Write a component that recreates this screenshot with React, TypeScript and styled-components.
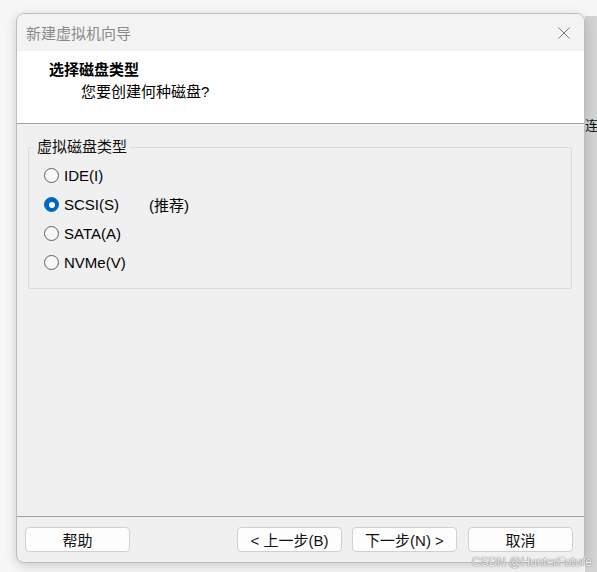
import styled, { createGlobalStyle } from "styled-components";

const GlobalStyle = createGlobalStyle`
  html, body {
    margin: 0;
    padding: 0;
    background: #f7f7f7;
    font-family: "Liberation Sans", "Noto Sans CJK SC", sans-serif;
    font-size: 15px;
    color: #000;
  }
`;

const Screen = styled.div`
  position: relative;
  display: flex;
  align-items: flex-start;
  width: 597px;
  height: 572px;
  padding: 13px 0 0 16px;
  box-sizing: border-box;
  overflow: hidden;
`;

const Window = styled.div`
  display: flex;
  flex-direction: column;
  flex: none;
  width: 569px;
  height: 550px;
  box-sizing: border-box;
  border: 1px solid #bdbdbd;
  border-radius: 8px;
  background: #f0f0f0;
  overflow: hidden;
  box-shadow: 0 3px 12px rgba(0, 0, 0, 0.18);
  z-index: 1;
`;

const BehindStrip = styled.div`
  flex: none;
  width: 13px;
  height: 556px;
  margin-top: 3px;
  background: #d3d3d3;
  overflow: hidden;
  white-space: nowrap;
`;

const BehindText = styled.div`
  margin-top: 101px;
  font-size: 13px;
  line-height: 18px;
  color: #111;
`;

const TitleBar = styled.div`
  display: flex;
  align-items: center;
  justify-content: space-between;
  height: 37px;
  padding: 0 14px 0 9px;
  background: #f3f3f3;
`;

const Title = styled.span`
  font-size: 15px;
  color: #8a8a8a;
`;

const Header = styled.div`
  height: 73px;
  box-sizing: border-box;
  padding: 9px 0 0 32px;
  background: #fff;
  border-bottom: 1px solid #a0a0a0;
`;

const HeaderTitle = styled.div`
  font-weight: bold;
  line-height: 20px;
`;

const HeaderSub = styled.div`
  margin: 2px 0 0 32px;
  line-height: 20px;
`;

const Body = styled.div`
  flex: 1;
  padding: 13px 12px 0 11px;
`;

const Group = styled.fieldset`
  margin: 0;
  padding: 4px 0 11px 15px;
  border: 1px solid #dadada;
  border-radius: 2px;
`;

const Legend = styled.legend`
  margin-left: -10px;
  padding: 0 3px;
  line-height: 20px;
  color: #111;
`;

const Option = styled.label`
  display: flex;
  align-items: center;
  height: 29px;
`;

const Radio = styled.span<{ $checked?: boolean }>`
  flex: none;
  width: 15px;
  height: 15px;
  box-sizing: border-box;
  border-radius: 50%;
  margin-right: 5px;
  background: ${(p) => (p.$checked ? "#0067c0" : "#f8f8f8")};
  border: 1px solid ${(p) => (p.$checked ? "#0067c0" : "#5f5f5f")};
  display: flex;
  align-items: center;
  justify-content: center;

  &::after {
    content: "";
    display: ${(p) => (p.$checked ? "block" : "none")};
    width: 6px;
    height: 6px;
    border-radius: 50%;
    background: #fff;
  }
`;

const Note = styled.span`
  margin-left: 30px;
`;

const Footer = styled.div`
  display: flex;
  align-items: center;
  gap: 10px;
  height: 46px;
  box-sizing: border-box;
  padding: 0 11px 0 8px;
  border-top: 1px solid #a0a0a0;
`;

const Spacer = styled.div`
  flex: 1;
`;

const Button = styled.button<{ $gap?: number }>`
  width: 105px;
  height: 25px;
  padding: 0;
  margin-left: ${(p) => p.$gap ?? 0}px;
  border: 1px solid #d0d0d0;
  border-radius: 4px;
  background: #fdfdfd;
  font-family: inherit;
  font-size: 15px;
  color: #111;
`;

const Watermark = styled.div`
  position: absolute;
  right: 5px;
  bottom: 3px;
  font-size: 12px;
  color: rgba(255, 255, 255, 0.9);
  text-shadow: 0 0 1px #7a7a7a, 0 0 1px #7a7a7a;
  z-index: 2;
`;

const options = [
  { label: "IDE(I)" },
  { label: "SCSI(S)", checked: true, note: "(推荐)" },
  { label: "SATA(A)" },
  { label: "NVMe(V)" },
];

export default function App() {
  return (
    <>
      <GlobalStyle />
      <Screen>
        <Window>
          <TitleBar>
            <Title>新建虚拟机向导</Title>
            <svg width="12" height="12" viewBox="0 0 12 12">
              <path d="M0.5 0.5 L11.5 11.5 M11.5 0.5 L0.5 11.5" stroke="#7a7a7a" strokeWidth="1" />
            </svg>
          </TitleBar>
          <Header>
            <HeaderTitle>选择磁盘类型</HeaderTitle>
            <HeaderSub>您要创建何种磁盘?</HeaderSub>
          </Header>
          <Body>
            <Group>
              <Legend>虚拟磁盘类型</Legend>
              {options.map((o) => (
                <Option key={o.label}>
                  <Radio $checked={o.checked} />
                  <span>{o.label}</span>
                  {o.note && <Note>{o.note}</Note>}
                </Option>
              ))}
            </Group>
          </Body>
          <Footer>
            <Button>帮助</Button>
            <Spacer />
            <Button>&lt; 上一步(B)</Button>
            <Button>下一步(N) &gt;</Button>
            <Button $gap={1}>取消</Button>
          </Footer>
        </Window>
        <BehindStrip>
          <BehindText>连</BehindText>
        </BehindStrip>
        <Watermark>CSDN @HunterFuture</Watermark>
      </Screen>
    </>
  );
}
